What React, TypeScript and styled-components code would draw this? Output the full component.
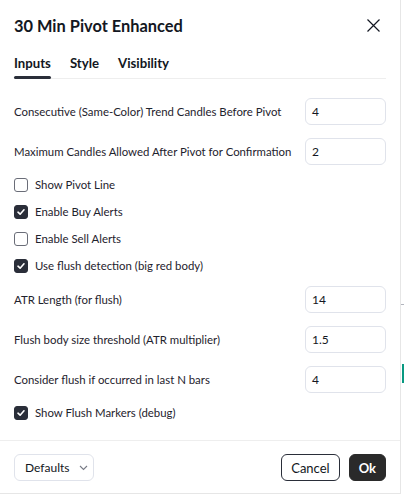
import React from "react";
import styled, { createGlobalStyle } from "styled-components";

const GlobalStyle = createGlobalStyle`
  html, body { margin: 0; padding: 0; background: #ffffff; }
  body { font-family: Lato, "Liberation Sans", sans-serif; color: #131722; }
  * { box-sizing: border-box; }
`;

const Page = styled.div`
  display: flex;
  width: 404px;
  height: 494px;
  overflow: hidden;
`;

const Dialog = styled.div`
  width: 401px;
  height: 494px;
  flex: none;
  display: flex;
  flex-direction: column;
  background: #ffffff;
  border-right: 1px solid #e6e6e6;
  border-bottom: 1px solid #e6e6e6;
`;

const Header = styled.div`
  height: 50px;
  display: flex;
  align-items: center;
  justify-content: space-between;
  padding: 0 20px 0 14px;
`;

const Title = styled.div`
  font-size: 16.4px;
  font-weight: 700;
  color: #131722;
`;

const CloseButton = styled.div`
  width: 14px;
  height: 14px;
  display: flex;
  align-items: center;
  justify-content: center;
`;

const Tabs = styled.div`
  margin: 0 14px;
  height: 29px;
  display: flex;
  gap: 19px;
  border-bottom: 1px solid #eeeeee;
`;

const Tab = styled.div<{ $active?: boolean }>`
  position: relative;
  font-size: 13.2px;
  font-weight: 700;
  color: #131722;
  padding-top: 5px;
  line-height: 17px;
  &::after {
    content: "";
    display: ${(p) => (p.$active ? "block" : "none")};
    position: absolute;
    left: 0;
    right: 0;
    bottom: -1px;
    height: 3px;
    border-radius: 2px;
    background: #2a2e39;
  }
`;

const Body = styled.div`
  flex: 1;
  display: flex;
  flex-direction: column;
  padding: 12px 14px 0;
`;

const InputRow = styled.div`
  height: 40px;
  display: flex;
  align-items: center;
  justify-content: space-between;
`;

const Label = styled.span`
  font-size: 11.4px;
  color: #1e222d;
  white-space: nowrap;
`;

const NumberBox = styled.div`
  flex: none;
  width: 81px;
  height: 27px;
  border: 1px solid #e0e3eb;
  border-radius: 6px;
  display: flex;
  align-items: center;
  padding-left: 6px;
  font-size: 12px;
  color: #131722;
`;

const CheckRow = styled.div`
  height: 27px;
  display: flex;
  align-items: center;
  gap: 7px;
`;

const Box = styled.div<{ $checked?: boolean }>`
  width: 14px;
  height: 14px;
  border-radius: 3px;
  border: 1px solid ${(p) => (p.$checked ? "#2a2e39" : "#6a6d78")};
  background: ${(p) => (p.$checked ? "#2a2e39" : "#ffffff")};
  display: flex;
  align-items: center;
  justify-content: center;
`;

const Footer = styled.div`
  border-top: 1px solid #eeeeee;
  padding: 13px 14px 12px;
  display: flex;
  align-items: center;
  justify-content: space-between;
`;

const Actions = styled.div`
  display: flex;
  gap: 9px;
`;

const Button = styled.div<{ $variant: "ghost" | "outline" | "primary" }>`
  height: 27px;
  display: flex;
  align-items: center;
  gap: 10px;
  border-radius: 6px;
  font-size: ${(p) => (p.$variant === "ghost" ? "12px" : "13px")};
  padding: ${(p) => (p.$variant === "ghost" ? "0 5px 0 10px" : "0 9px")};
  border: 1px solid
    ${(p) =>
      p.$variant === "ghost" ? "#e0e3eb" : p.$variant === "outline" ? "#2a2e39" : "#2a2a2a"};
  background: ${(p) => (p.$variant === "primary" ? "#2a2a2a" : "#ffffff")};
  color: ${(p) => (p.$variant === "primary" ? "#ffffff" : "#131722")};
  font-weight: ${(p) => (p.$variant === "primary" ? 700 : 400)};
`;

const ChartEdge = styled.div`
  flex: 1;
  height: 494px;
  background: #ffffff;
`;

const Check = () => (
  <svg width="10" height="10" viewBox="0 0 10 10">
    <path d="M2 5.2 L4.1 7.2 L8 2.8" fill="none" stroke="#ffffff" strokeWidth="1.6" strokeLinecap="round" strokeLinejoin="round" />
  </svg>
);

const CheckItem = ({ checked, label }: { checked?: boolean; label: string }) => (
  <CheckRow>
    <Box $checked={checked}>{checked && <Check />}</Box>
    <Label>{label}</Label>
  </CheckRow>
);

const NumItem = ({ label, value }: { label: string; value: string }) => (
  <InputRow>
    <Label>{label}</Label>
    <NumberBox>{value}</NumberBox>
  </InputRow>
);

export default function App() {
  return (
    <>
      <GlobalStyle />
      <Page>
        <Dialog>
          <Header>
            <Title>30 Min Pivot Enhanced</Title>
            <CloseButton>
              <svg width="13" height="13" viewBox="0 0 13 13">
                <path d="M0.5 0.5 L12.5 12.5 M12.5 0.5 L0.5 12.5" stroke="#131722" strokeWidth="1.2" />
              </svg>
            </CloseButton>
          </Header>
          <Tabs>
            <Tab $active>Inputs</Tab>
            <Tab>Style</Tab>
            <Tab>Visibility</Tab>
          </Tabs>
          <Body>
            <NumItem label="Consecutive (Same-Color) Trend Candles Before Pivot" value="4" />
            <NumItem label="Maximum Candles Allowed After Pivot for Confirmation" value="2" />
            <CheckItem label="Show Pivot Line" />
            <CheckItem checked label="Enable Buy Alerts" />
            <CheckItem label="Enable Sell Alerts" />
            <CheckItem checked label="Use flush detection (big red body)" />
            <NumItem label="ATR Length (for flush)" value="14" />
            <NumItem label="Flush body size threshold (ATR multiplier)" value="1.5" />
            <NumItem label="Consider flush if occurred in last N bars" value="4" />
            <CheckItem checked label="Show Flush Markers (debug)" />
          </Body>
          <Footer>
            <Button $variant="ghost">
              Defaults
              <svg width="9" height="6" viewBox="0 0 9 6">
                <path d="M1 1 L4.5 4.5 L8 1" fill="none" stroke="#787b86" strokeWidth="1.1" />
              </svg>
            </Button>
            <Actions>
              <Button $variant="outline">Cancel</Button>
              <Button $variant="primary">Ok</Button>
            </Actions>
          </Footer>
        </Dialog>
        <ChartEdge>
          <svg width="3" height="494" viewBox="0 0 3 494">
            <rect x="0" y="304" width="3" height="1" fill="#b2b5be" />
            <rect x="1" y="364" width="2" height="19" fill="#089981" />
          </svg>
        </ChartEdge>
      </Page>
    </>
  );
}
